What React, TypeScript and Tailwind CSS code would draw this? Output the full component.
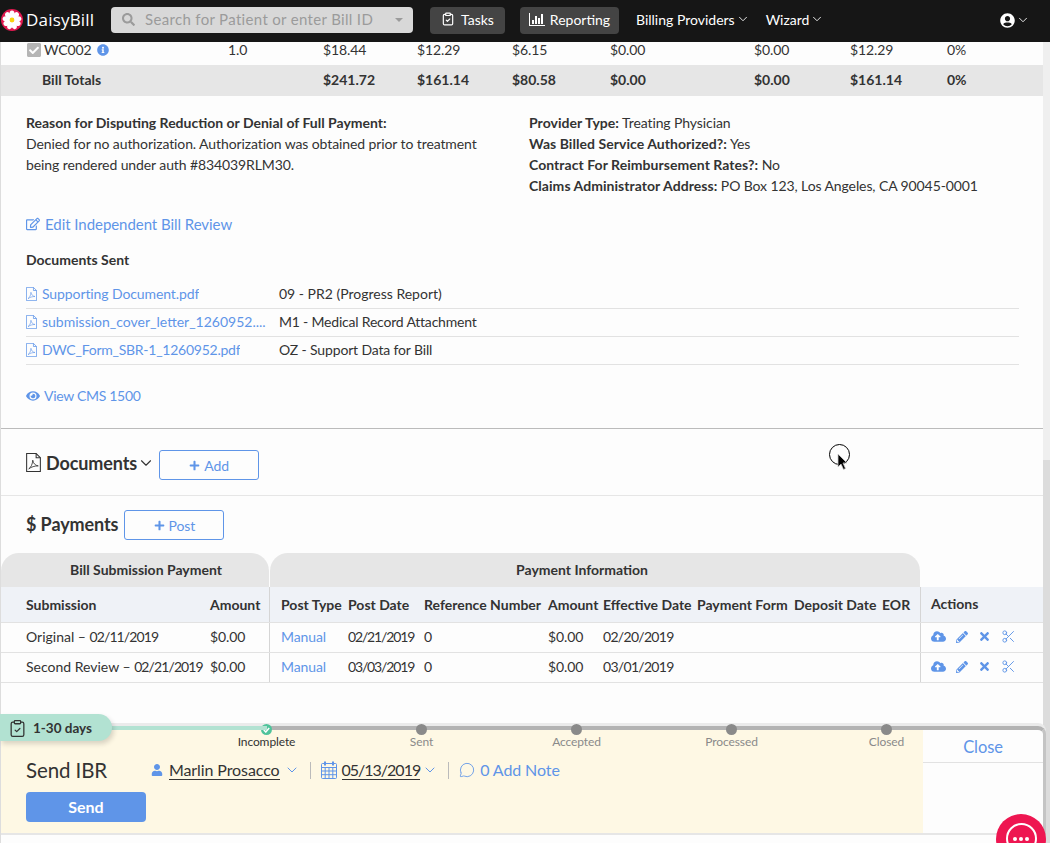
import { ChevronDown, ClipboardCheck, MessageCircle, Scissors } from "lucide-react";
import {
  FaCheckSquare,
  FaCloudUploadAlt,
  FaEye,
  FaInfoCircle,
  FaPencilAlt,
  FaPlus,
  FaRegEdit,
  FaSearch,
  FaTimes,
  FaUser,
  FaUserCircle,
} from "react-icons/fa";

const font = "font-['Lato','Open_Sans',sans-serif]";

const docs = [
  { name: "Supporting Document.pdf", type: "09 - PR2 (Progress Report)", track: "tracking-[-0.1px]", typeTrack: "tracking-normal" },
  { name: "submission_cover_letter_1260952....", type: "M1 - Medical Record Attachment", track: "tracking-normal", typeTrack: "tracking-[-0.2px]" },
  { name: "DWC_Form_SBR-1_1260952.pdf", type: "OZ - Support Data for Bill", track: "tracking-[-0.25px]", typeTrack: "tracking-[-0.15px]" },
];

const payments = [
  { label: "Original – ", date: "02/11/2019", post: "02/21/2019", eff: "02/20/2019" },
  { label: "Second Review – ", date: "02/21/2019", post: "03/03/2019", eff: "03/01/2019" },
];

const steps = ["Incomplete", "Sent", "Accepted", "Processed", "Closed"];

const billCols = "grid grid-cols-[202px_95px_94px_95px_98px_144px_96px_97px_1fr] items-center";
const payCols = "grid grid-cols-[209px_60px_78px_76px_124px_55px_94px_97px_88px_38px_1fr] items-center";

function Daisy() {
  const petals = [0, 40, 80, 120, 160, 200, 240, 280, 320];
  return (
    <svg width="22" height="22" viewBox="0 0 24 24" className="shrink-0">
      <circle cx="12" cy="12" r="12" fill="#e0194f" />
      {petals.map((a) => (
        <ellipse key={a} cx="12" cy="5.8" rx="2.9" ry="4.2" fill="#fff" transform={`rotate(${a} 12 12)`} />
      ))}
      <circle cx="12" cy="12" r="2.6" fill="#fbd40a" />
    </svg>
  );
}

function PdfIcon({ w, h }: { w: number; h: number }) {
  return (
    <svg width={w} height={h} viewBox="0 0 14 18" fill="none" stroke="currentColor" strokeWidth="1" className="shrink-0">
      <path d="M0.5 0.5h9l4 4v13h-13z" />
      <path d="M9.5 0.5v4h4" />
      <path d="M2.5 15c2.2-1.4 3.6-4.6 3.8-8.2 0.5 3 2.2 5 5.2 5.4-3.4 0-6.6 1-9 2.8z" strokeWidth="0.8" />
    </svg>
  );
}

function Calendar() {
  return (
    <svg width="16" height="18" viewBox="0 0 16 18" fill="none" stroke="#5f95e8" strokeWidth="1">
      <rect x="0.5" y="2.5" width="15" height="15" rx="1" />
      <path d="M0.5 6.5h15M0.5 10h15M0.5 13.7h15M4.2 6.5v11M8 6.5v11M11.8 6.5v11" />
      <path d="M4 0.5v4M12 0.5v4" strokeWidth="2" />
    </svg>
  );
}

function Bars() {
  return (
    <svg width="16" height="13" viewBox="0 0 16 13" fill="#fff">
      <path d="M0 0h1v12h15v1H0z" />
      <path d="M3 7h2v4H3zM6 3h2v8H6zM9 5h2v6H9zM12 1h2v10h-2z" />
    </svg>
  );
}

function Navbar() {
  return (
    <nav className="flex h-[42px] items-center bg-[#161616] pb-[2px] text-[14px] text-white">
      <div className="ml-px flex w-[110px] items-center gap-[3px]">
        <Daisy />
        <span className="font-['Open_Sans',sans-serif] text-[17px] tracking-[0.2px]">DaisyBill</span>
      </div>
      <div className="flex h-[26px] w-[302px] items-center rounded-sm bg-[#d8d8d8] pr-[10px] pb-[1px] pl-[11px] text-[15px] tracking-[0.33px] text-[#9b9b9b]">
        <FaSearch className="text-[13px]" />
        <span className="ml-[10px] flex-1">Search for Patient or enter Bill ID</span>
        <span className="h-0 w-0 border-x-[4px] border-t-[4px] border-x-transparent border-t-[#9b9b9b]" />
      </div>
      <div className="ml-[17px] flex h-[27px] w-[75px] items-center justify-center gap-[6px] rounded-sm bg-[#444] pb-[2px] tracking-normal">
        <ClipboardCheck size={14} />
        Tasks
      </div>
      <div className="ml-[15px] flex h-[27px] w-[99px] items-center justify-center gap-[5px] rounded-sm bg-[#444] pb-[2px] tracking-normal">
        <Bars />
        Reporting
      </div>
      <div className="ml-[17px] flex items-center gap-[1px] pb-[2px] tracking-normal">
        Billing Providers
        <ChevronDown size={14} strokeWidth={1.5} />
      </div>
      <div className="ml-[16px] flex items-center gap-[1px] pb-[2px] tracking-normal">
        Wizard
        <ChevronDown size={14} strokeWidth={1.5} />
      </div>
      <div className="mr-[20px] ml-auto flex items-center gap-[1px]">
        <FaUserCircle className="text-[15px]" />
        <ChevronDown size={14} strokeWidth={1.5} />
      </div>
    </nav>
  );
}

function BillRows() {
  return (
    <>
      <div className={`${billCols} h-[23px] pb-[7px] pl-[25px] leading-[16px]`}>
        <div className="flex items-center">
          <FaCheckSquare className="mr-[2px] text-[16px] text-[#b5b5b5]" />
          WC002
          <FaInfoCircle className="ml-[5px] text-[12px] text-[#5f95e8]" />
        </div>
        <div>1.0</div>
        <div>$18.44</div>
        <div>$12.29</div>
        <div>$6.15</div>
        <div>$0.00</div>
        <div>$0.00</div>
        <div>$12.29</div>
        <div>0%</div>
      </div>
      <div className={`${billCols} h-[31px] bg-[#e6e6e6] pb-[2px] pl-[25px] font-bold tracking-normal`}>
        <div className="pl-[16px]">Bill Totals</div>
        <div />
        <div>$241.72</div>
        <div>$161.14</div>
        <div>$80.58</div>
        <div>$0.00</div>
        <div>$0.00</div>
        <div>$161.14</div>
        <div>0%</div>
      </div>
    </>
  );
}

function Fact({ label, value }: { label: string; value: string }) {
  return (
    <div>
      <span className="font-bold tracking-[0.05px]">{label}</span> {value}
    </div>
  );
}

function ReviewDetails() {
  return (
    <section className="h-[333px] border-b border-[#bbb] px-[25px] pt-[16px]">
      <div className="grid grid-cols-[503px_1fr] leading-[21px]">
        <div className="w-[470px]">
          <div className="font-bold tracking-normal">Reason for Disputing Reduction or Denial of Full Payment:</div>
          Denied for no authorization. Authorization was obtained prior to treatment being rendered under auth #834039RLM30.
        </div>
        <div>
          <Fact label="Provider Type:" value="Treating Physician" />
          <Fact label="Was Billed Service Authorized?:" value="Yes" />
          <Fact label="Contract For Reimbursement Rates?:" value="No" />
          <Fact label="Claims Administrator Address:" value="PO Box 123, Los Angeles, CA 90045-0001" />
        </div>
      </div>
      <div className="mt-[17px] flex h-[22px] items-center gap-[5px] text-[15px] tracking-[-0.05px] text-[#5f95e8]">
        <FaRegEdit className="text-[14px]" />
        Edit Independent Bill Review
      </div>
      <div className="mt-[14px] font-bold leading-[21px] tracking-normal">Documents Sent</div>
      <div className="mt-[11px] w-[993px]">
        {docs.map((d) => (
          <div key={d.name} className="grid h-[28px] grid-cols-[253px_1fr] items-center border-b border-[#e2e2e2] pb-[2px]">
            <div className="flex items-center gap-[5px] text-[#5f95e8]">
              <PdfIcon w={11} h={14} />
              <span className={`truncate ${d.track}`}>{d.name}</span>
            </div>
            <div className={d.typeTrack}>{d.type}</div>
          </div>
        ))}
      </div>
      <div className="mt-[20px] flex items-center gap-[4px] tracking-[-0.3px] text-[#5f95e8]">
        <FaEye className="text-[14px]" />
        View CMS 1500
      </div>
    </section>
  );
}

function OutlineButton({ label, className }: { label: string; className: string }) {
  return (
    <div className={`flex h-[30px] w-[100px] items-center justify-center gap-[4px] rounded-[3px] border border-[#5f95e8] text-[#5f95e8] ${className}`}>
      <FaPlus className="text-[11px]" />
      {label}
    </div>
  );
}

function PaymentsTable() {
  return (
    <>
      <div className="mt-[13px] flex h-[34px] items-stretch gap-px font-bold tracking-normal">
        <div className="flex w-[268px] items-center justify-center rounded-t-[18px] bg-[#e6e6e6] pb-[2px] pl-[22px]">Bill Submission Payment</div>
        <div className="flex w-[650px] items-center justify-center rounded-t-[18px] bg-[#e6e6e6] pr-[26px] pb-[2px]">Payment Information</div>
      </div>
      <div className={`${payCols} h-[36px] border-b border-[#e2e2e2] bg-[#eff2f7] font-bold tracking-normal`}>
        <div className="pl-[25px]">Submission</div>
        <div className="flex h-full items-center border-r border-[#d5d5d5]">Amount</div>
        <div className="pl-[11px]">Post Type</div>
        <div>Post Date</div>
        <div>Reference Number</div>
        <div>Amount</div>
        <div>Effective Date</div>
        <div>Payment Form</div>
        <div>Deposit Date</div>
        <div>EOR</div>
        <div className="flex h-full items-center border-l border-[#d5d5d5] pb-[2px] pl-[10px]">Actions</div>
      </div>
      {payments.map((p) => (
        <div key={p.label} className={`${payCols} h-[30px] border-b border-[#e2e2e2]`}>
          <div className="pb-[2px] pl-[25px] tracking-normal whitespace-nowrap">
            {p.label}
            <span className="tracking-[-0.9px]">{p.date}</span>
          </div>
          <div className="flex h-full items-center border-r border-[#d5d5d5] pb-[2px]">$0.00</div>
          <div className="pb-[2px] pl-[11px] text-[#5f95e8]">Manual</div>
          <div className="pb-[2px] tracking-[-1.15px]">{p.post}</div>
          <div className="pb-[2px]">0</div>
          <div className="pb-[2px]">$0.00</div>
          <div className="pb-[2px] tracking-[-0.7px]">{p.eff}</div>
          <div />
          <div />
          <div />
          <div className="flex h-full items-center gap-[10px] border-l border-[#d5d5d5] pb-[2px] pl-[10px] text-[#5f95e8]">
            <FaCloudUploadAlt className="text-[15px]" />
            <FaPencilAlt className="text-[12px]" />
            <FaTimes className="text-[13px]" />
            <Scissors size={15} strokeWidth={1.5} />
          </div>
        </div>
      ))}
    </>
  );
}

function SendPanel() {
  return (
    <div className="relative mt-[43px] mr-[-3px] flex h-[109px] rounded-tr-[8px] border-t-[4px] border-r-[3px] border-b-[2px] border-t-[#b3b3b3] border-r-[#c4c4c4] border-b-[#e6e6e6] shadow-[0_-3px_0_#ebebeb]">
      <div className="absolute top-[-4px] left-[100px] h-[4px] w-[166px] bg-[#b2e2d2]" />
      <div className="absolute top-[-16px] left-[-1px] z-10 flex h-[27px] w-[112px] items-center gap-[6px] rounded-r-[14px] bg-[#b2e2d2] pt-[1px] pl-[8px] text-[13.5px] font-bold tracking-normal shadow-[2px_3px_5px_rgba(0,0,0,0.15)]">
        <ClipboardCheck size={19} strokeWidth={1.6} />
        1-30 days
      </div>
      <div className="flex w-[922px] flex-col bg-[#fef8e4] pl-[25px]">
        <div className="ml-[163px] flex h-[21px]">
          {steps.map((s, i) => (
            <div key={s} className="flex w-[155px] shrink-0 flex-col items-center">
              <div className={`-mt-[6px] flex h-[11px] w-[11px] items-center justify-center rounded-full ${i === 0 ? "bg-[#4fc39b]" : "bg-[#8a8a8a]"}`}>
                {i === 0 && (
                  <svg width="7" height="6" viewBox="0 0 7 6" fill="none" stroke="#fff" strokeWidth="1.5">
                    <path d="M0.8 3l2 2 3.4-4" />
                  </svg>
                )}
              </div>
              <div className={`-mt-[1px] text-[12px] leading-[16px] ${i === 0 ? "text-[#333]" : "text-[#8a8a8a]"}`}>{s}</div>
            </div>
          ))}
        </div>
        <div className="mt-[6px] flex h-[26px] items-center text-[16px]">
          <span className="w-[125px] text-[20.5px]">Send IBR</span>
          <FaUser className="text-[12px] text-[#5f95e8]" />
          <span className="ml-[6px] border-b border-[#333] leading-[18px]">Marlin Prosacco</span>
          <ChevronDown size={16} strokeWidth={1.5} className="ml-[4px] text-[#5f95e8]" />
          <span className="mx-[10px] h-[17px] w-px bg-[#bbb]" />
          <Calendar />
          <span className="ml-[5px] border-b border-[#333] leading-[18px] tracking-[-1px]">05/13/2019</span>
          <ChevronDown size={16} strokeWidth={1.5} className="ml-[2px] text-[#5f95e8]" />
          <span className="mx-[10px] h-[17px] w-px bg-[#bbb]" />
          <MessageCircle size={16} strokeWidth={1.3} className="text-[#5f95e8]" />
          <span className="ml-[5px] text-[#5f95e8]">0 Add Note</span>
        </div>
        <div className="mt-[9px] flex h-[30px] w-[120px] items-center justify-center rounded-sm bg-[#5f95e8] text-[16px] font-bold tracking-normal text-white">Send</div>
      </div>
      <div className="flex-1">
        <div className="flex h-[33px] items-center justify-center border-b border-[#e2e2e2] pt-[2px] text-[16.5px] text-[#5f95e8]">Close</div>
      </div>
    </div>
  );
}

export default function App() {
  return (
    <div className={`relative h-[843px] w-[1050px] overflow-hidden bg-[#fdfdfd] text-[14px] tracking-[-0.1px] text-[#333] ${font}`}>
      <Navbar />
      <div className="flex">
        <main className="w-[1043px] border-l border-[#ddd]">
          <BillRows />
          <ReviewDetails />
          <section className="flex h-[67px] items-start border-b border-[#e6e6e6] pt-[21px] pl-[25px]">
            <span className="mt-[3px]">
              <PdfIcon w={15} h={19} />
            </span>
            <h2 className="mt-[1px] ml-[5px] text-[18px] leading-[24px] font-bold">Documents</h2>
            <ChevronDown size={18} strokeWidth={1.5} className="mt-[4px]" />
            <OutlineButton label="Add" className="ml-[4px]" />
          </section>
          <section className="mt-[14px] flex h-[30px] items-center pl-[25px]">
            <h2 className="-mt-[2px] text-[18px] font-bold">$ Payments</h2>
            <OutlineButton label="Post" className="ml-[6px]" />
          </section>
          <PaymentsTable />
          <SendPanel />
        </main>
        <div className="h-[801px] w-[7px] bg-[#efefef]">
          <div className="mt-[418px] h-[383px] bg-[#dcdcdc]" />
        </div>
      </div>

      {/* recorded mouse pointer */}
      <div className="absolute top-[444px] left-[829px] h-[21px] w-[21px] rounded-full border border-black" />
      <svg width="12" height="18" viewBox="0 0 12 18" className="absolute top-[453px] left-[837px]">
        <path d="M1 1v13l3-3 2.5 5.5 2-1L6 10h4z" fill="#000" stroke="#ccc" strokeWidth="0.8" />
      </svg>

      {/* chat bubble */}
      <div className="absolute top-[814px] left-[996px] flex h-[50px] w-[50px] items-start justify-center rounded-full bg-[#ee1651] pt-[9px]">
        <div className="flex h-[31px] w-[31px] items-center justify-center gap-[2px] rounded-full border-2 border-white">
          <span className="h-[4px] w-[4px] rounded-full bg-white" />
          <span className="h-[4px] w-[4px] rounded-full bg-white" />
          <span className="h-[4px] w-[4px] rounded-full bg-white" />
        </div>
      </div>
    </div>
  );
}
